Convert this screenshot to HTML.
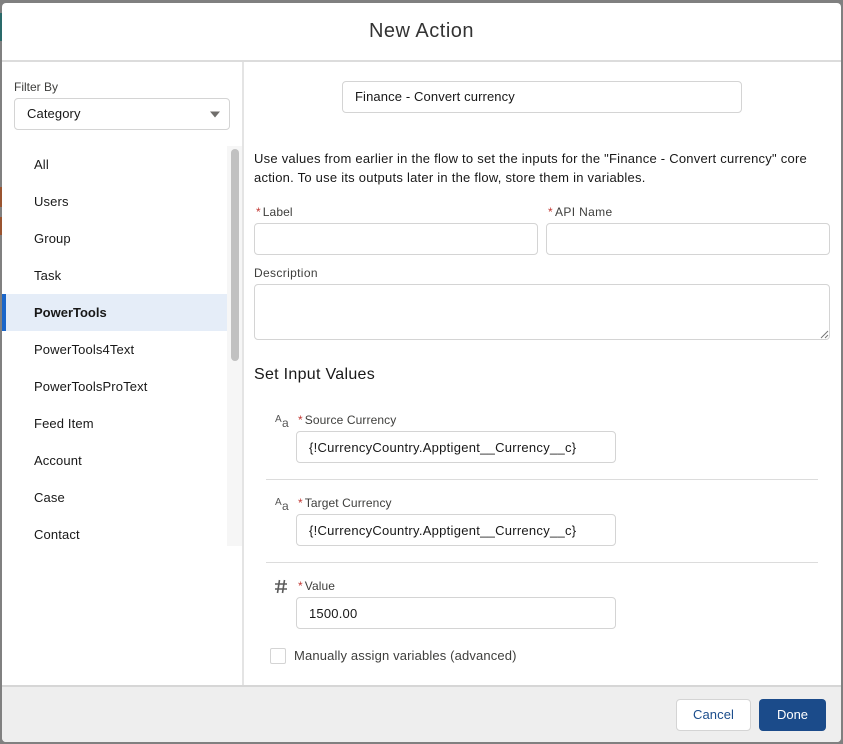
<!DOCTYPE html>
<html lang="en"><head><meta charset="utf-8"><title>New Action</title>
<style>
html,body{margin:0;padding:0;width:843px;height:744px;overflow:hidden;background:#808080}
body{position:relative;font-family:"Liberation Sans",sans-serif;color:#181818}
.a{position:absolute}
.t{position:absolute;white-space:nowrap;font-size:13px;line-height:16px}
.l{font-size:12px;color:#3e3e3c;letter-spacing:.1px}
.b{position:absolute;box-sizing:border-box;background:#fff;border:1px solid #d4d4d4;border-radius:4px}
.r{color:#c23934;margin-right:2px}
.n{left:34px;letter-spacing:.13px}
.hr{position:absolute;left:266px;width:552px;height:1px;background:#dcdcdc}
.v{letter-spacing:.27px}
</style></head><body>
<div class="a" style="left:0;top:13px;width:2px;height:28px;background:#2a6a6a"></div>
<div class="a" style="left:0;top:187px;width:2px;height:20px;background:#9a5430"></div>
<div class="a" style="left:0;top:217px;width:2px;height:18px;background:#9a5430"></div>
<div class="a" style="left:2px;top:3px;width:839px;height:739px;background:#fff;border-radius:4px;overflow:hidden"></div>
<div class="t" style="left:2px;width:839px;top:19px;line-height:24px;text-align:center;font-size:20px;color:#333;letter-spacing:.5px">New Action</div>
<div class="a" style="left:2px;top:60px;width:839px;height:2px;background:#dcdcdc"></div>
<div class="a" style="left:242px;top:62px;width:2px;height:623px;background:#e4e4e4"></div>
<div class="t l" style="left:14px;top:79px;letter-spacing:0">Filter By</div>
<div class="b" style="left:14px;top:98px;width:216px;height:32px"></div>
<div class="t" style="left:27px;top:106px;letter-spacing:.1px">Category</div>
<svg class="a" style="left:209px;top:111px" width="12" height="7"><path d="M1 0.5H11L6 6.5Z" fill="#706e6b"/></svg>
<div class="a" style="left:227px;top:146px;width:15px;height:400px;background:#f6f6f6"></div>
<div class="a" style="left:231px;top:149px;width:8px;height:212px;background:#c1c1c1;border-radius:4px"></div>
<div class="a" style="left:2px;top:294px;width:225px;height:37px;background:#e5edf8"></div>
<div class="a" style="left:2px;top:294px;width:4px;height:37px;background:#1b66c9"></div>
<div class="t n" style="top:157px">All</div>
<div class="t n" style="top:194px">Users</div>
<div class="t n" style="top:231px">Group</div>
<div class="t n" style="top:268px">Task</div>
<div class="t n" style="top:305px;font-weight:bold;letter-spacing:0">PowerTools</div>
<div class="t n" style="top:342px">PowerTools4Text</div>
<div class="t n" style="top:379px">PowerToolsProText</div>
<div class="t n" style="top:416px">Feed Item</div>
<div class="t n" style="top:453px">Account</div>
<div class="t n" style="top:490px">Case</div>
<div class="t n" style="top:527px">Contact</div>
<div class="b" style="left:342px;top:81px;width:400px;height:32px"></div>
<div class="t" style="left:355px;top:89px;letter-spacing:.12px">Finance - Convert currency</div>
<div class="t" style="left:254px;top:149px;line-height:19px;letter-spacing:.24px">Use values from earlier in the flow to set the inputs for the "Finance - Convert currency" core<br>action. To use its outputs later in the flow, store them in variables.</div>
<div class="t l" style="left:256px;top:204px"><span class="r">*</span>Label</div>
<div class="b" style="left:254px;top:223px;width:284px;height:32px"></div>
<div class="t l" style="left:548px;top:204px;letter-spacing:.35px"><span class="r">*</span>API Name</div>
<div class="b" style="left:546px;top:223px;width:284px;height:32px"></div>
<div class="t l" style="left:254px;top:265px;letter-spacing:.35px">Description</div>
<div class="b" style="left:254px;top:284px;width:576px;height:56px"></div>
<svg class="a" style="left:820px;top:330px" width="10" height="9"><path d="M1 8L8 1M5 8L8 5" stroke="#777" stroke-width="1" fill="none"/></svg>
<div class="t" style="left:254px;top:365px;font-size:16px;line-height:20px;letter-spacing:.3px">Set Input Values</div>
<div class="t" style="left:275px;top:412px;font-size:10px;color:#555">A</div><div class="t" style="left:282px;top:415px;font-size:12px;color:#555">a</div>
<div class="t l" style="left:298px;top:412px"><span class="r">*</span>Source Currency</div>
<div class="b" style="left:296px;top:431px;width:320px;height:32px"></div>
<div class="t v" style="left:309px;top:440px">{!CurrencyCountry.Apptigent__Currency__c}</div>
<div class="hr" style="top:479px"></div>
<div class="t" style="left:275px;top:495px;font-size:10px;color:#555">A</div><div class="t" style="left:282px;top:498px;font-size:12px;color:#555">a</div>
<div class="t l" style="left:298px;top:495px"><span class="r">*</span>Target Currency</div>
<div class="b" style="left:296px;top:514px;width:320px;height:32px"></div>
<div class="t v" style="left:309px;top:523px">{!CurrencyCountry.Apptigent__Currency__c}</div>
<div class="hr" style="top:562px"></div>
<svg class="a" style="left:274px;top:579px" width="14" height="15"><path d="M5.5 1L3.5 14M10.5 1L8.5 14M1 5H13M1 10H13" stroke="#5c5c5c" stroke-width="1.6" fill="none"/></svg>
<div class="t l" style="left:298px;top:578px"><span class="r">*</span>Value</div>
<div class="b" style="left:296px;top:597px;width:320px;height:32px"></div>
<div class="t" style="left:309px;top:606px;letter-spacing:.2px">1500.00</div>
<div class="b" style="left:270px;top:648px;width:16px;height:16px;border-radius:2px"></div>
<div class="t" style="left:294px;top:648px;color:#3e3e3c;letter-spacing:.14px">Manually assign variables (advanced)</div>
<div class="a" style="left:2px;top:685px;width:839px;height:57px;background:#eeeeee;border-top:2px solid #d6d6d6;box-sizing:border-box;border-radius:0 0 4px 4px"></div>
<div class="b" style="left:676px;top:699px;width:75px;height:32px;line-height:30px;text-align:center;font-size:13px;color:#1b4d8c;letter-spacing:.1px">Cancel</div>
<div class="a" style="left:759px;top:699px;width:67px;height:32px;line-height:32px;text-align:center;font-size:13px;color:#fff;background:#1b4b8a;border-radius:4px">Done</div>
</body></html>
